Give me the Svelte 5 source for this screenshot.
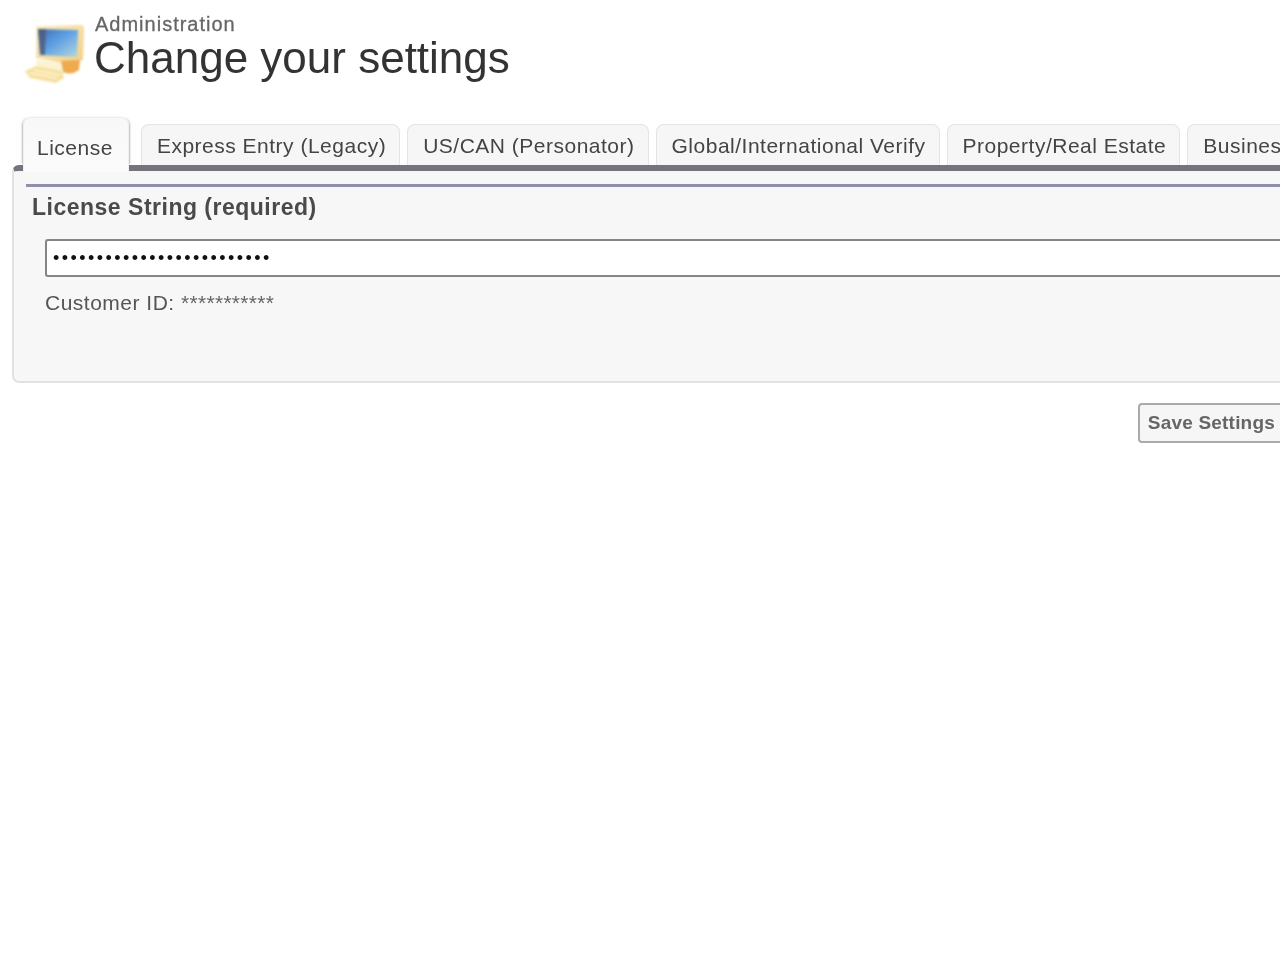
<script>
  const tabs = [
    'License',
    'Express Entry (Legacy)',
    'US/CAN (Personator)',
    'Global/International Verify',
    'Property/Real Estate',
    'Business Coder'
  ];
  let active = $state(0);
  let license = $state('abcdefghijklmnopqrstuvwxy');
</script>

<div class="page">
  <header class="head">
    <svg class="logo" viewBox="0 0 60 60" aria-hidden="true">
      <defs>
        <linearGradient id="screen" x1="0" y1="0" x2="1" y2="1">
          <stop offset="0" stop-color="#3f6cae" />
          <stop offset="0.45" stop-color="#5d9fe4" />
          <stop offset="1" stop-color="#b4d8de" />
        </linearGradient>
        <linearGradient id="case" x1="0" y1="0" x2="1" y2="1">
          <stop offset="0" stop-color="#f8ecc6" />
          <stop offset="1" stop-color="#f4cf86" />
        </linearGradient>
      </defs>
      <path d="M12 2 L57 1 Q60 1 60 4 L59 36 L44 40 L12 34 Z" fill="url(#case)" />
      <path d="M14 5 L54 6 L53 33 L16 31 Z" fill="url(#screen)" />
      <path d="M14 5 L22 5 L21 31 L16 31 Z" fill="#4d5a72" opacity="0.75" />
      <path d="M37 37 L56 36 L55 46 Q47 52 39 48 Z" fill="#eeaa4c" />
      <path d="M12 36 L36 39 L38 47 L13 43 Z" fill="#fcf3d0" />
      <path d="M1 47 L12 42 L38 47 L40 54 L32 59 L6 54 Z" fill="#f6e09f" />
      <path d="M6 49 L32 54 M10 46 L36 51" stroke="#fff6d8" stroke-width="1.5" />
    </svg>
    <div class="titles">
      <div class="crumb">Administration</div>
      <h1>Change your settings</h1>
    </div>
  </header>

  <ul class="tabs">
    {#each tabs as tab, i}
      <li class="tab" class:active={i === active}>
        <button type="button" onclick={() => (active = i)}>{tab}</button>
      </li>
    {/each}
  </ul>

  <section class="panel">
    <h2>License String (required)</h2>
    <div class="body">
      <input type="password" bind:value={license} aria-label="License String" />
      <p class="cust">Customer ID: <span>***********</span></p>
    </div>
  </section>

  <div class="actions">
    <button type="button" class="save">Save Settings</button>
  </div>
</div>

<style>
  :global(body) {
    overflow: hidden;
    background: #fff;
  }

  .page {
    width: 1285px;
    height: 960px;
    padding-left: 12px;
    box-sizing: border-box;
    font-family: 'Liberation Sans', Arial, sans-serif;
    color: #444;
    filter: blur(0.5px);
  }

  .head {
    display: flex;
    align-items: flex-start;
    gap: 10px;
    padding: 24px 0 0 12px;
    height: 117px;
    box-sizing: border-box;
  }

  .logo {
    width: 60px;
    height: 60px;
    flex: none;
    filter: blur(1px);
  }

  .titles {
    margin-top: -11px;
  }

  .crumb {
    margin-left: 1px;
    font-size: 20px;
    line-height: 22px;
    letter-spacing: 1px;
    color: #666;
    -webkit-text-stroke: 0.3px #666;
  }

  h1 {
    margin: 0;
    font-size: 44px;
    font-weight: 400;
    line-height: 46px;
    color: #333;
  }

  .tabs {
    display: flex;
    align-items: flex-end;
    gap: 7px;
    list-style: none;
    margin: 0;
    padding: 0 0 0 11px;
    height: 48px;
    white-space: nowrap;
    position: relative;
    z-index: 1;
  }

  .tab {
    flex: none;
  }

  .tab button {
    display: block;
    height: 41px;
    padding: 2px 13px 0 15px;
    border: 1px solid #e4e4e4;
    border-bottom: 0;
    border-radius: 8px 8px 0 0;
    background: #f6f6f6;
    font: inherit;
    font-size: 21px;
    letter-spacing: 0.5px;
    color: #444;
    cursor: pointer;
  }

  .tab.active {
    margin-right: 5px;
    box-shadow: -2px 0 2px -1px #bbb, 2px 0 2px -1px #bbb;
    border-radius: 8px 8px 0 0;
  }

  .tab.active button {
    height: 55px;
    margin-bottom: -7px;
    padding: 6px 15px 0 13px;
    background: linear-gradient(#f8f8f8, #fbfbfb);
    border-color: #eee;
    position: relative;
  }

  .panel {
    height: 218px;
    box-sizing: border-box;
    border: 2px solid #e2e2e2;
    border-top: 6px solid #74747c;
    border-radius: 7px 0 0 7px;
    background: #f7f7f7;
    padding: 13px 0 0 12px;
  }

  h2 {
    margin: 0;
    padding: 5px 0 0 6px;
    border-top: 3px solid #8f8fab;
    font-size: 23px;
    line-height: 30px;
    font-weight: 700;
    letter-spacing: 0.5px;
    color: #4a4a4a;
  }

  .body {
    padding: 17px 0 0 19px;
  }

  input {
    display: block;
    width: 100%;
    height: 38px;
    box-sizing: border-box;
    border: 2px solid #858585;
    border-right: 0;
    border-radius: 3px 0 0 3px;
    padding: 0 6px;
    background: #fff;
    font-family: 'Liberation Sans', Arial, sans-serif;
    font-size: 18px;
    letter-spacing: 2.45px;
    color: #111;
    outline: none;
  }

  .cust {
    margin: 13px 0 0;
    font-size: 21px;
    line-height: 26px;
    letter-spacing: 0.5px;
    color: #555;
  }

  .cust span {
    letter-spacing: 0.3px;
    color: #666;
  }

  .actions {
    display: flex;
    justify-content: flex-end;
    margin-top: 20px;
  }

  .save {
    height: 40px;
    padding: 0 8px;
    border: 2px solid #aaa;
    border-radius: 4px;
    background: #f6f6f6;
    font-family: 'Liberation Sans', Arial, sans-serif;
    font-size: 19px;
    font-weight: 700;
    letter-spacing: 0.2px;
    color: #666;
  }
</style>
